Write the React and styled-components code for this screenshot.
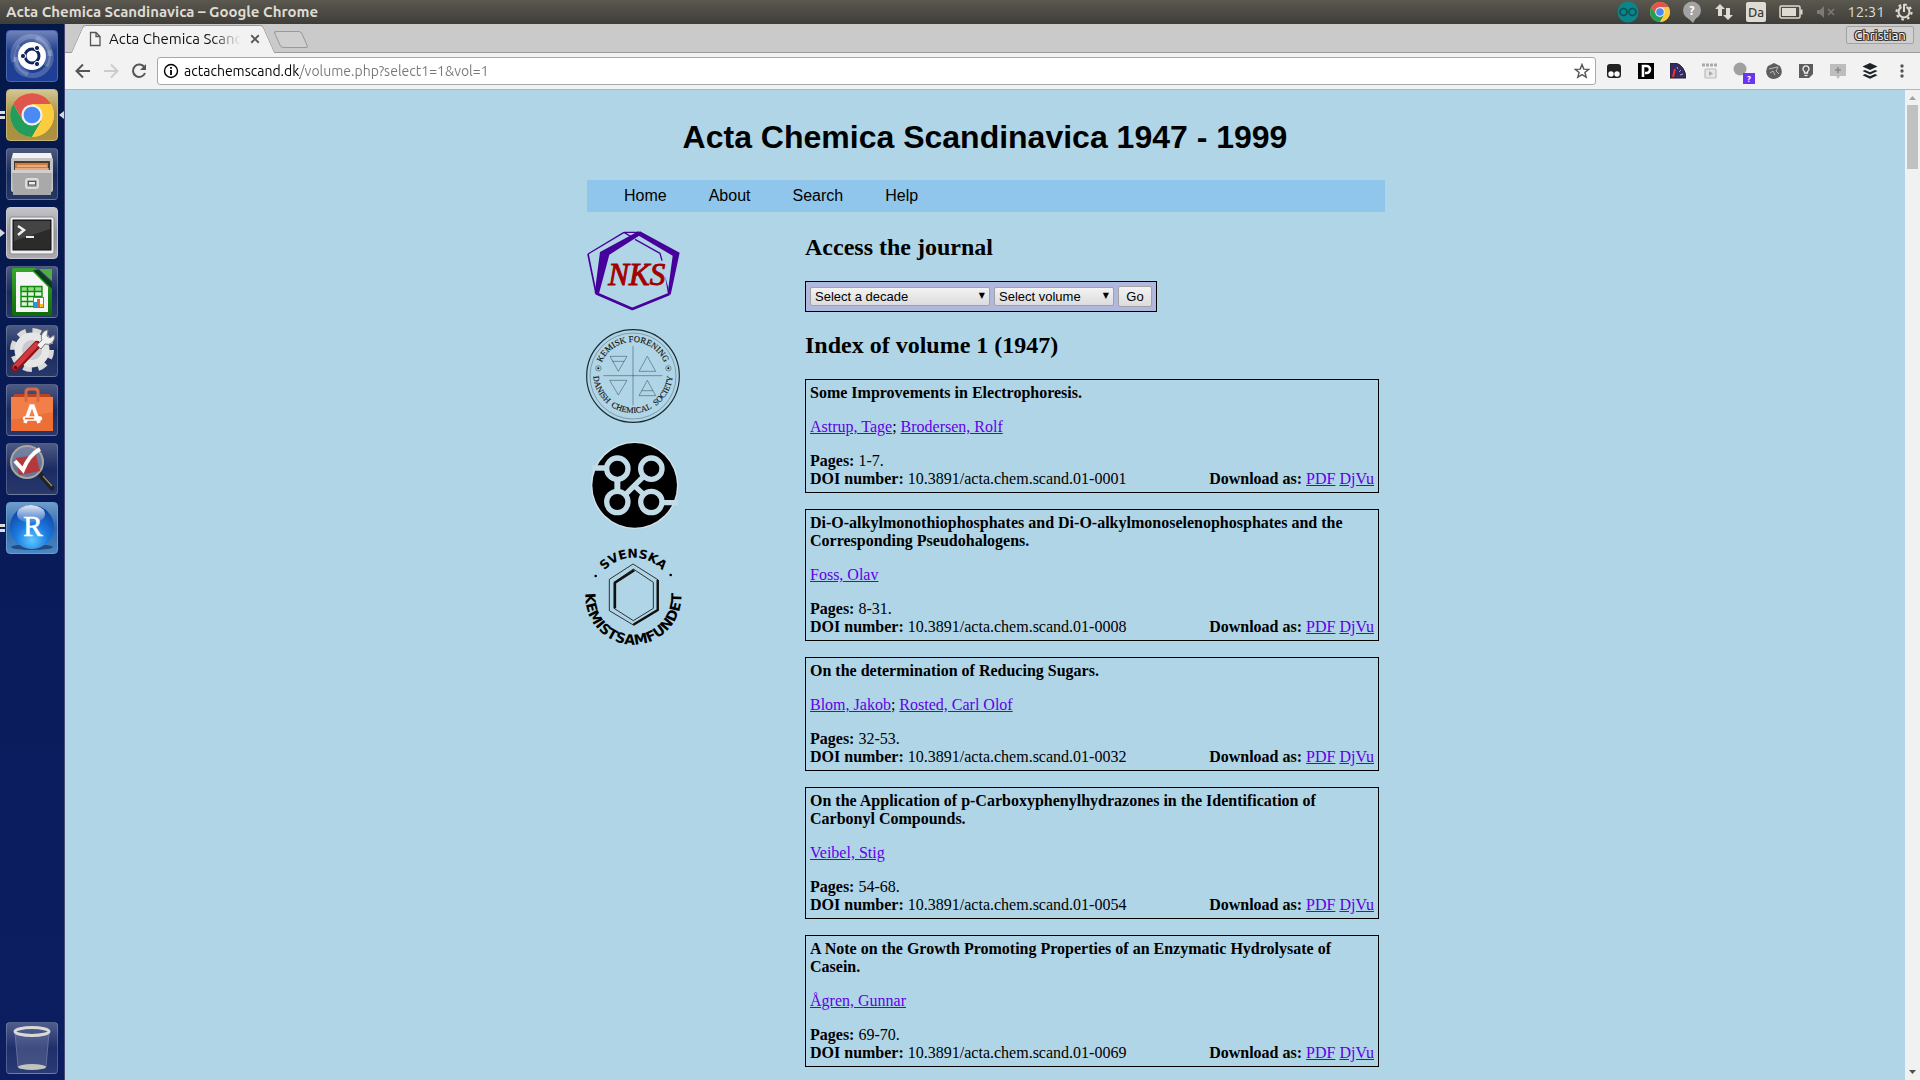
import React from "react";
import styled, { createGlobalStyle } from "styled-components";

const UI = `Ubuntu, "Noto Sans", "Open Sans", sans-serif`;
const SERIF = `"Liberation Serif", "Times New Roman", serif`;
const SANS = `"Liberation Sans", Arial, sans-serif`;
const SKY = "#b0d5e6";
const LINK = "#5f00e6";

const Global = createGlobalStyle`
  *, *::before, *::after { box-sizing: border-box; }
  html, body { margin: 0; padding: 0; overflow: hidden; }
  button, input, select { font: inherit; margin: 0; }
`;

const Desktop = styled.div`
  display: flex;
  flex-direction: column;
  height: 100vh;
  overflow: hidden;
  font-family: ${UI};
`;

/* ---------- system panel ---------- */
const Panel = styled.header`
  flex: none;
  display: flex;
  align-items: center;
  justify-content: space-between;
  height: 24px;
  padding: 0 6px;
  background: linear-gradient(#5a584f, #3e3d38);
  color: #dfdbd2;
`;
const WindowTitle = styled.div`
  font-size: 15px;
  line-height: 20px;
  font-weight: 700;
`;
const Indicators = styled.div`
  display: flex;
  align-items: center;
`;
const Indicator = styled.button`
  display: flex;
  align-items: center;
  justify-content: center;
  width: ${(p) => (p.$wide ? 38 : 32)}px;
  height: 24px;
  padding: 0;
  border: 0;
  background: none;
  color: inherit;
`;
const Clock = styled.button`
  width: 52px;
  padding: 0 4px 0 0;
  border: 0;
  background: none;
  color: inherit;
  font-size: 15px;
  line-height: 20px;
  text-align: center;
`;
const Keyboard = styled.span`
  width: 20px;
  height: 20px;
  border-radius: 2px;
  background: #dfdbd2;
  color: #3c3b37;
  font-size: 13px;
  font-weight: 500;
  line-height: 20px;
`;

/* ---------- launcher ---------- */
const Body = styled.div`
  flex: 1;
  min-height: 0;
  display: flex;
`;
const Launcher = styled.nav`
  flex: none;
  display: flex;
  flex-direction: column;
  gap: 7px;
  width: 65px;
  padding: 6px;
  background: linear-gradient(#041848, #0a1c5c 60%, #0c1e60);
  border-right: 1px solid #4b4673;
`;
const Tile = styled.button`
  position: relative;
  display: block;
  width: 52px;
  height: 52px;
  padding: 0;
  border: 1px solid ${(p) => p.$edge || "rgba(255,255,255,.2)"};
  border-radius: 4px;
  background: ${(p) =>
    p.$bg || "linear-gradient(rgba(255,255,255,.28), rgba(255,255,255,.08) 50%, rgba(255,255,255,.13))"};
  margin-top: ${(p) => (p.$last ? "auto" : 0)};
  & > svg { display: block; margin: -1px; }
`;
const Pip = styled.span`
  position: absolute;
  top: 21px;
  ${(p) => (p.$right ? "right: -7px;" : "left: -7px;")}
  width: 5px;
  height: 8px;
  background: ${(p) => (p.$double ? "linear-gradient(#ddd 3px, transparent 3px 5px, #ddd 5px)" : "#d5d8e0")};
  clip-path: ${(p) =>
    p.$double ? "none" : p.$right ? "polygon(100% 0, 0 50%, 100% 100%)" : "polygon(0 0, 100% 50%, 0 100%)"};
`;

/* ---------- browser chrome ---------- */
const Browser = styled.div`
  flex: 1;
  min-width: 0;
  display: flex;
  flex-direction: column;
`;
const TabStrip = styled.div`
  flex: none;
  display: flex;
  height: 29px;
  padding: 1px 6px 0 12px;
  background: #cacaca;
  border-bottom: 1px solid #999;
`;
const Tab = styled.div`
  position: relative;
  display: flex;
  align-items: center;
  width: 192px;
  height: 28px;
  padding: 0 8px 0 12px;
  z-index: 0;
  font-size: 15px;
  line-height: 20px;
  color: #111;
  &::before, &::after {
    content: "";
    position: absolute;
    z-index: -1;
    top: 0;
    bottom: 0;
    width: 60%;
    background: #f2f2f2;
    border-top: 1px solid #999;
  }
  &::before { left: 0; border-left: 1px solid #999; transform: skewX(-24deg); border-top-left-radius: 3px; }
  &::after { right: 0; border-right: 1px solid #999; transform: skewX(24deg); border-top-right-radius: 3px; }
`;
const TabTitle = styled.span`
  flex: 1;
  margin: 0 8px;
  overflow: hidden;
  white-space: nowrap;
  mask-image: linear-gradient(90deg, #000 78%, transparent);
`;
const PlainButton = styled.button`
  display: flex;
  padding: 0;
  border: 0;
  background: none;
  color: #555;
`;
const NewTab = styled.button`
  width: 28px;
  height: 17px;
  margin: 6px 0 0 8px;
  padding: 0;
  border: 1px solid #999;
  border-radius: 3px;
  background: #cfcfcf;
  transform: skewX(24deg);
`;
const Profile = styled.button`
  width: 68px;
  height: 18px;
  margin: 1px 0 0 auto;
  padding: 0;
  border: 1px solid #a2a2a2;
  border-radius: 2px;
  background: #d0d0d0;
  color: #fff;
  font-size: 13px;
  line-height: 16px;
  text-shadow: 1px 0 #333, -1px 0 #333, 0 1px #333, 0 -1px #333, 1px 1px #444, -1px -1px #444, 1px -1px #444, -1px 1px #444;
`;
const Toolbar = styled.div`
  flex: none;
  display: flex;
  align-items: center;
  height: 37px;
  padding: 0 2px 0 4px;
  background: #f2f2f2;
  border-bottom: 1px solid #b5b5b5;
`;
const ToolButton = styled.button`
  display: flex;
  align-items: center;
  justify-content: center;
  width: ${(p) => (p.$nav ? 28 : 32)}px;
  height: 28px;
  padding: 0;
  border: 0;
  background: none;
  color: #555;
`;
const Omnibox = styled.div`
  flex: 1;
  display: flex;
  align-items: center;
  height: 28px;
  margin: 0 2px 0 4px;
  padding: 0 5px;
  background: #fff;
  border: 1px solid #a9a9a9;
  border-radius: 3px;
`;
const Address = styled.input`
  flex: 1;
  min-width: 0;
  margin: 0 5px;
  padding: 0;
  border: 0;
  outline: 0;
  font-size: 14px;
  line-height: 20px;
  color: transparent;
  background: linear-gradient(90deg, #000 116px, #777 116px);
  background-clip: text;
`;

/* ---------- page ---------- */
const View = styled.div`
  flex: 1;
  min-height: 0;
  display: flex;
`;
const Page = styled.main`
  flex: 1;
  overflow: hidden;
  background: ${SKY};
  color: #000;
  font-family: ${SERIF};
  font-size: 16px;
  line-height: 18px;
`;
const Sheet = styled.div`
  max-width: 800px;
  margin: 0 auto;
  padding-top: 29px;
`;
const Title = styled.h1`
  margin: 0 0 24px;
  font-family: ${SANS};
  font-size: 32px;
  line-height: 37px;
  text-align: center;
`;
const Menu = styled.nav`
  display: flex;
  gap: 42px;
  margin-left: 2px;
  padding: 7px 37px;
  background: #90c6eb;
  font-family: ${SANS};
  & a { color: #000; text-decoration: none; }
`;
const Columns = styled.div`
  display: grid;
  grid-template-columns: 220px 1fr;
`;
const Logos = styled.aside`
  display: flex;
  flex-direction: column;
  gap: 16px;
  padding-top: 18px;
  & svg { display: block; overflow: visible; }
`;
const Content = styled.section`
  padding: 22px 6px 0 0;
`;
const Heading = styled.h2`
  margin: 0 0 20px;
  font-size: 24px;
  line-height: 27px;
`;
const Picker = styled.form`
  display: flex;
  align-items: center;
  gap: 4px;
  width: fit-content;
  margin-bottom: 20px;
  padding: 4px;
  background: #b0b8de;
  border: 1px solid #000;
  font-family: ${SANS};
  font-size: 13px;
  line-height: 15px;
`;
const SelectBox = styled.label`
  position: relative;
  width: ${(p) => p.$width}px;
  &::after {
    content: "▼";
    position: absolute;
    right: 5px;
    top: 1px;
    font-family: "DejaVu Sans", sans-serif;
    font-size: 8px;
    line-height: 15px;
    pointer-events: none;
  }
`;
const Select = styled.select`
  appearance: none;
  display: block;
  width: 100%;
  height: 19px;
  padding: 0 4px;
  border: 1px solid #a3a3a3;
  border-radius: 2px;
  background: linear-gradient(#f3f3f3, #dcdcdc);
  color: #000;
`;
const Go = styled.button`
  width: 34px;
  height: 21px;
  padding: 0;
  border: 1px solid #a3a3a3;
  border-radius: 2px;
  background: linear-gradient(#f3f3f3, #dcdcdc);
  color: #000;
`;
const Card = styled.article`
  margin-bottom: 16px;
  padding: 4px;
  border: 1px solid #000;
  & a { color: ${LINK}; }
`;
const CardTitle = styled.h3`
  margin: 0;
  font-size: 16px;
  line-height: 18px;
`;
const Authors = styled.p`
  margin: 16px 0;
`;
const Row = styled.div`
  display: flex;
  justify-content: space-between;
`;

const ScrollTrack = styled.div`
  flex: none;
  display: flex;
  flex-direction: column;
  justify-content: space-between;
  width: 15px;
  padding: 15px 2px;
  background: #f1f1f1;
  position: relative;
`;
const Thumb = styled.div`
  height: 64px;
  background: #c1c1c1;
`;
const ScrollArrow = styled.span`
  position: absolute;
  left: 4px;
  ${(p) => (p.$down ? "bottom: 6px;" : "top: 6px;")}
  width: 7px;
  height: 4px;
  background: ${(p) => (p.$down ? "#505050" : "#a3a3a3")};
  clip-path: ${(p) => (p.$down ? "polygon(0 0, 100% 0, 50% 100%)" : "polygon(0 100%, 100% 100%, 50% 0)")};
`;

/* ---------- drawings ---------- */
const ChromeLogo = ({ size }) => (
  <svg width={size} height={size} viewBox="-50 -50 100 100" aria-hidden="true">
    <circle r="50" fill="#fbc93d" />
    <path d="M-43-25A50 50 0 0 1 43-25L0-25L-21 12Z" fill="#e0564c" />
    <path d="M-43-25A50 50 0 0 0 0 50L22 12L0 24L-21 12Z" fill="#239d5c" />
    <path d="M43-25L0-25L22 12L0 50A50 50 0 0 0 43-25Z" fill="#fdcb3e" />
    <circle r="24" fill="#f1f1f1" />
    <circle r="19" fill="#4a8af4" />
  </svg>
);

const Ubuntu = () => (
  <svg width="52" height="52" viewBox="0 0 52 52">
    <g fill="none" stroke="#fff" strokeOpacity=".2" strokeWidth="5">
      <path d="M8 32A19 19 0 0 1 30 7Q44 10 44 26" />
      <path d="M44 20A19 19 0 0 1 22 45Q8 42 10 27" />
      <path d="M30 8Q48 18 40 36M22 44Q4 34 14 16" />
    </g>
    <circle cx="26" cy="26" r="14" fill="#fff" />
    <circle cx="26" cy="26" r="7" fill="none" stroke="#10265e" strokeWidth="3" />
    <g fill="#10265e" stroke="#fff" strokeWidth="1">
      <circle cx="17" cy="26" r="2.6" />
      <circle cx="31" cy="18" r="2.6" />
      <circle cx="31" cy="34" r="2.6" />
    </g>
  </svg>
);
const Files = () => (
  <svg width="52" height="52" viewBox="0 0 52 52">
    <path d="M7 5H45L47 13H5Z" fill="#f2f2f2" />
    <rect x="5" y="10" width="42" height="34" rx="2" fill="#c4c4c4" />
    <rect x="8" y="13" width="36" height="10" fill="#4b3a30" />
    <path d="M9 15H42V23H9Z" fill="#d5793f" />
    <path d="M11 18H41M9 21H43" stroke="#f6e0c0" strokeWidth="1" />
    <path d="M6 22H46L45 47H7Z" fill="#a9a9a9" />
    <path d="M6 22H46V25H6Z" fill="#cfcfcf" />
    <rect x="20" y="31" width="12" height="9" rx="2" fill="none" stroke="#ddd" strokeWidth="2" />
    <rect x="22.500" y="33.500" width="7" height="3.500" fill="#eee" stroke="#555" />
  </svg>
);
const Terminal = () => (
  <svg width="52" height="52" viewBox="0 0 52 52">
    <rect x="4" y="10" width="44" height="37" rx="2" fill="#efefef" stroke="#8a8a90" />
    <rect x="7" y="13" width="38" height="30" fill="#2b2b2b" stroke="#111" />
    <path d="M8 14H44V22L8 34Z" fill="#555" opacity=".6" />
    <path d="M12 19L18 23L12 28" fill="none" stroke="#eee" strokeWidth="2.500" />
    <path d="M20 30H28" stroke="#eee" strokeWidth="2" />
  </svg>
);
const Calc = () => (
  <svg width="52" height="52" viewBox="0 0 52 52">
    <defs>
      <linearGradient id="leaf" x1="0" x2="0" y1="0" y2="1">
        <stop offset="0" stopColor="#36a62a" /><stop offset="1" stopColor="#0e6d0b" />
      </linearGradient>
    </defs>
    <path d="M8 4H28L44 20V48H8Z" fill="#f6f6f6" stroke="url(#leaf)" strokeWidth="4" strokeLinejoin="round" />
    <path d="M33 3H46V15Z" fill="#4fb03f" />
    <path d="M27 4L33 4L46 17V23Z" fill="#0b3f1c" />
    <rect x="14" y="20" width="22" height="21" fill="#e3f7de" />
    <rect x="14" y="20" width="22" height="5" fill="#8fdc86" />
    <path d="M15 20.500H36V40.500H15ZM15 25.500H36M15 30.500H36M15 35.500H36M21.500 20V40M28.500 20V40" fill="none" stroke="#128a10" strokeWidth="1.400" />
    <rect x="27.500" y="31.500" width="10" height="10" fill="#fff" stroke="#777" />
    <path d="M28 41V36H31V41Z" fill="#2396e8" /><path d="M31 41V33H34V41Z" fill="#e0622b" /><path d="M34 41V38H37V41Z" fill="#f0c025" />
  </svg>
);
const Settings = () => (
  <svg width="52" height="52" viewBox="0 0 52 52">
    <circle cx="26" cy="25" r="19" fill="none" stroke="#d9d9d9" strokeWidth="6" strokeDasharray="8.500 6.400" />
    <circle cx="26" cy="25" r="13.500" fill="#bfbfbf" stroke="#e6e6e6" strokeWidth="8" />
    <circle cx="26" cy="25" r="10" fill="#c9c9cf" />
    <path d="M9 43L31 20" stroke="#8f1218" strokeWidth="8" strokeLinecap="round" />
    <path d="M9 42L30 20" stroke="#d13a3c" strokeWidth="5" strokeLinecap="round" />
    <circle cx="9.500" cy="42.500" r="1.800" fill="#5d0c10" />
    <path d="M31 20L36 15A7 7 0 0 1 42 5L41 11L44 13L48 10A7 7 0 0 1 39 19L35 24Z" fill="#f0f0f0" stroke="#777" />
  </svg>
);
const Software = () => (
  <svg width="52" height="52" viewBox="0 0 52 52">
    <path d="M5 14L9 10H43L47 14Z" fill="#b9441d" />
    <rect x="5" y="13" width="42" height="34" fill="#ee6f36" />
    <path d="M5 13H47V28L5 36Z" fill="#f58a55" opacity=".6" />
    <path d="M20 18V8Q20 5 23 5H29Q32 5 32 8V18" fill="none" stroke="#d96a45" strokeWidth="3" />
    <path d="M19 39L25 22H27L33 39" fill="none" stroke="#fff" strokeWidth="3.600" />
    <path d="M19 34.500H34" stroke="#fff" strokeWidth="4.500" strokeLinecap="round" />
    <path d="M19 34.500H28" stroke="#e86527" strokeWidth="1.500" />
  </svg>
);
const Magnifier = () => (
  <svg width="52" height="52" viewBox="0 0 52 52">
    <path d="M34 31L46 45" stroke="#222" strokeWidth="5" strokeLinecap="round" />
    <path d="M37 33L46 43" stroke="#888" strokeWidth="1.400" />
    <circle cx="21" cy="19" r="16" fill="#9aa3bb" fillOpacity=".6" stroke="#aaa69c" strokeWidth="2" />
    <path d="M10 15L30 12L34 28L13 32Z" fill="#b5383d" />
    <path d="M9 18L17 27Q23 12 34 6" fill="none" stroke="#fff" strokeWidth="4" />
  </svg>
);
const RStudio = () => (
  <svg width="52" height="52" viewBox="0 0 52 52">
    <defs>
      <radialGradient id="ball" cx=".5" cy=".8" r=".8">
        <stop offset="0" stopColor="#5cc8ff" /><stop offset=".45" stopColor="#1c7be0" /><stop offset="1" stopColor="#0d3f9e" />
      </radialGradient>
      <linearGradient id="shine" x1="0" x2="0" y1="0" y2="1">
        <stop offset="0" stopColor="#fff" stopOpacity=".9" /><stop offset="1" stopColor="#fff" stopOpacity=".1" />
      </linearGradient>
    </defs>
    <ellipse cx="26" cy="45" rx="21" ry="3" fill="#1b3f72" opacity=".8" />
    <circle cx="26" cy="25" r="22" fill="url(#ball)" />
    <ellipse cx="25" cy="12" rx="14" ry="9" fill="url(#shine)" />
    <text x="27" y="34" textAnchor="middle" fontFamily={SERIF} fontSize="29" fill="#fff" stroke="#fff" strokeWidth=".6">R</text>
  </svg>
);
const Trash = () => (
  <svg width="52" height="52" viewBox="0 0 52 52">
    <path d="M9 11L12 45H40L43 11Z" fill="#fff" fillOpacity=".14" stroke="#7f8bb4" strokeOpacity=".6" />
    <ellipse cx="26" cy="45" rx="14" ry="3" fill="#bfc4bd" />
    <ellipse cx="26" cy="9.500" rx="17" ry="4" fill="#4a5888" stroke="#d9d9d6" strokeWidth="3" />
  </svg>
);

const NksLogo = () => (
  <svg width="96" height="82" viewBox="45 180 288 246" role="img" aria-label="Norsk Kjemisk Selskap">
    <g fill="none" stroke="#46009b" strokeLinejoin="round">
      <path d="M162 187H210M162 187L54 252" strokeWidth="4" />
      <path d="M54 252L78 370" strokeWidth="5" />
      <path d="M162 187L185 201M195 208L270 250L276 272" strokeWidth="4" />
      <path d="M78 370L187 417L298 372" strokeWidth="8" />
    </g>
    <path d="M90 246L205 184L212 194L118 254L86 374L74 370Z" fill="#46009b" />
    <path d="M210 184L329 248L302 374L293 370L308 257L204 196Z" fill="#46009b" />
    <path d="M285 318L300 372L293 366Z" fill="#46009b" />
    <text x="115" y="344" fontFamily={SERIF} fontStyle="italic" fontSize="93" fill="#a30000" stroke="#a30000" strokeWidth="3">NKS</text>
  </svg>
);
const DanishLogo = () => (
  <svg width="96" height="96" viewBox="45 474 288 288" role="img" aria-label="Kemisk Forening">
    <defs>
      <path id="dkTop" d="M87 618A102 102 0 0 1 291 618" />
      <path id="dkBottom" d="M70 610A119 119 0 1 0 308 610" />
    </defs>
    <g fill="none" stroke="#1c2a31">
      <circle cx="189" cy="618" r="139" strokeWidth="3.500" />
      <circle cx="189" cy="618" r="129" strokeWidth="1" />
      <g strokeWidth="1.300">
        <path d="M189 528V706M100 617H277" />
        <path d="M120 559H171L145 604ZM127 574H163M207 604H257L232 559ZM119 631H171L145 675ZM207 677H257L232 631ZM215 662H249" />
        <circle cx="85" cy="595" r="8" /><circle cx="295" cy="595" r="8" />
      </g>
    </g>
    <circle cx="85" cy="595" r="3" /><circle cx="295" cy="595" r="3" />
    <g fontFamily={SERIF} textAnchor="middle" fill="#111" stroke="#111" strokeWidth=".4">
      <text fontSize="26"><textPath href="#dkTop" startOffset="50%">KEMISK FORENING</textPath></text>
      <text fontSize="25"><textPath href="#dkBottom" startOffset="50%">DANISH&#160; CHEMICAL&#160; SOCIETY</textPath></text>
    </g>
  </svg>
);
const MoleculeLogo = () => (
  <svg width="96" height="90" viewBox="45 60 288 270" role="img" aria-label="Chemical society emblem">
    <circle cx="194" cy="196" r="131" fill="#d3e4ea" />
    <circle cx="194" cy="196" r="127" fill="#000" />
    <g fill="none" stroke="#c2dce7" strokeWidth="16">
      <circle cx="142" cy="146" r="32" /><circle cx="244" cy="146" r="32" />
      <circle cx="142" cy="246" r="32" /><circle cx="244" cy="246" r="32" />
      <path d="M66 144H108M278 248H324" />
      <path d="M142 178V214" strokeWidth="18" />
      <path d="M221 169L166 224" />
      <path d="M192 196L221 223" />
    </g>
  </svg>
);
const SwedishLogo = () => (
  <svg width="96" height="100" viewBox="45 378 288 300" role="img" aria-label="Svenska Kemistsamfundet">
    <defs>
      <path id="seTop" d="M73 530A117 117 0 0 1 307 530" />
      <path id="seBottom" d="M60 468A144 144 0 1 0 320 468" />
    </defs>
    <g fontFamily="DejaVu Sans, sans-serif" fontWeight="700" textAnchor="middle">
      <text fontSize="37"><textPath href="#seTop" startOffset="50%">SVENSKA</textPath></text>
      <text fontSize="42"><textPath href="#seBottom" startOffset="50%">KEMISTSAMFUNDET</textPath></text>
    </g>
    <circle cx="77" cy="468" r="4" /><circle cx="302" cy="465" r="4" />
    <g fill="none" stroke="#111">
      <path d="M189 432L265 480V570L190 615L118 572V478ZM190 447L250 487V565L190 602L132 565V487Z" strokeWidth="2.500" />
      <path d="M263 480V570L190 614M135 565V488L193 451" strokeWidth="7" />
    </g>
  </svg>
);

const Svg = ({ size = 16, children, ...rest }) => (
  <svg width={size} height={size} viewBox="0 0 16 16" fill="none" stroke="currentColor" strokeWidth="2" {...rest}>{children}</svg>
);

const extensions = [
  ["Tampermonkey", <Svg stroke="none"><rect x="1" y="1" width="14" height="14" rx="3" fill="#222" /><circle cx="5" cy="11" r="2.700" fill="#fff" /><circle cx="11" cy="11" r="2.700" fill="#fff" /></Svg>],
  ["Pushbullet", <Svg><rect width="16" height="16" fill="#000" stroke="none" /><path d="M5 14V3H8.500A3 3 0 0 1 8.500 10H7" stroke="#fff" strokeWidth="2.600" /></Svg>],
  ["Speed dial", <Svg><path d="M0 0H6Q15 3 16 15H0Z" fill="#352a63" stroke="#222" strokeWidth="1" /><path d="M3 14L5 6" stroke="#f03030" /><path d="M7 4L8 6M11 7L9 9M13 11L10 12" stroke="#a9a0d8" strokeWidth="1" /></Svg>],
  ["Video", <Svg stroke="#bbb" strokeWidth="1.200"><path d="M0 2H15" stroke="#aaa" strokeWidth="3" strokeDasharray="3 1" /><rect x="3" y="6" width="11" height="9" rx="1" fill="#e6e6e6" /><path d="M7 8V13L11 10.500Z" fill="#aaa" stroke="none" /></Svg>],
  ["Question", <svg width="26" height="26" viewBox="0 0 26 26"><circle cx="11" cy="11" r="6.500" fill="#a0a0a0" /><rect x="14" y="15" width="12" height="11" fill="#6a35f0" /><text x="20" y="24" textAnchor="middle" fontSize="9" fontWeight="700" fill="#fff">?</text></svg>],
  ["Cookie", <Svg><path d="M6 1L8 0L10 1L14 3Q17 8 15 12Q12 16 8 16Q3 16 1 12Q-1 7 2 3Z" fill="#5e5e5e" stroke="none" /><path d="M3 6L7 5L12 4L10 8L13 11M4 10L7 8L9 12" stroke="#bbb" strokeWidth="1" /></Svg>],
  ["Bulb", <Svg><path d="M1 1H15V11L11 15H1Z" fill="#5c5c5c" stroke="none" /><path d="M6.500 10V8.500A3 3 0 1 1 9.500 8.500V10Z" stroke="#eee" strokeWidth="1.300" /><path d="M6.500 12.500H9.500" stroke="#eee" strokeWidth="1.300" /></Svg>],
  ["Add note", <Svg><path d="M0 1H16V13H10L8 16L6 13H0Z" fill="#bdbdbd" stroke="none" /><path d="M8 4V10M5 7H11" stroke="#888" strokeWidth="1.500" /></Svg>],
  ["Buffer", <Svg stroke="none" fill="#1c2226"><path d="M8 0L15.500 3.500L8 7L.5 3.500Z" /><path d="M.5 8L3 7L8 9.200L13 7L15.500 8L8 11.500Z" /><path d="M.5 12.200L3 11L8 13.200L13 11L15.500 12.200L8 15.700Z" /></Svg>],
];

const apps = [
  { name: "Search your computer", icon: <Ubuntu />, bg: "linear-gradient(#7084bb, #203f8e 40%, #1e3f98)", edge: "#4c66ae" },
  { name: "Google Chrome", icon: <svg width="52" height="52" viewBox="0 0 52 52"><g transform="translate(4 4)"><ChromeLogo size={44} /></g></svg>, bg: "linear-gradient(#d3c793, #a88f42 50%, #ab9140)", edge: "#c9b674", pips: ["double", "right"] },
  { name: "Files", icon: <Files /> },
  { name: "Terminal", icon: <Terminal />, bg: "linear-gradient(#c4c4ca, #97979f 50%, #a9a9af)", edge: "#c9c9cf", pips: ["left"] },
  { name: "LibreOffice Calc", icon: <Calc /> },
  { name: "System Settings", icon: <Settings /> },
  { name: "Ubuntu Software", icon: <Software /> },
  { name: "Magnifier", icon: <Magnifier /> },
  { name: "RStudio", icon: <RStudio />, bg: "linear-gradient(#6d9ccb, #2d68ac 50%, #4a88c4)", edge: "#6c9ccb", pips: ["double"] },
  { name: "Trash", icon: <Trash />, last: true },
];

const articles = [
  { title: "Some Improvements in Electrophoresis.", authors: ["Astrup, Tage", "Brodersen, Rolf"], pages: "1-7.", doi: "10.3891/acta.chem.scand.01-0001" },
  { title: "Di-O-alkylmonothiophosphates and Di-O-alkylmonoselenophosphates and the Corresponding Pseudohalogens.", authors: ["Foss, Olav"], pages: "8-31.", doi: "10.3891/acta.chem.scand.01-0008" },
  { title: "On the determination of Reducing Sugars.", authors: ["Blom, Jakob", "Rosted, Carl Olof"], pages: "32-53.", doi: "10.3891/acta.chem.scand.01-0032" },
  { title: "On the Application of p-Carboxyphenylhydrazones in the Identification of Carbonyl Compounds.", authors: ["Veibel, Stig"], pages: "54-68.", doi: "10.3891/acta.chem.scand.01-0054" },
  { title: "A Note on the Growth Promoting Properties of an Enzymatic Hydrolysate of Casein.", authors: ["Ågren, Gunnar"], pages: "69-70.", doi: "10.3891/acta.chem.scand.01-0069" },
];

function Article({ title, authors, pages, doi }) {
  return (
    <Card>
      <CardTitle>{title}</CardTitle>
      <Authors>
        {authors.map((a, i) => (
          <React.Fragment key={a}>{i > 0 && "; "}<a href="#author">{a}</a></React.Fragment>
        ))}
      </Authors>
      <div><b>Pages:</b> {pages}</div>
      <Row>
        <span><b>DOI number:</b> {doi}</span>
        <span><b>Download as:</b> <a href="#pdf">PDF</a> <a href="#djvu">DjVu</a></span>
      </Row>
    </Card>
  );
}

export default function App() {
  return (
    <Desktop>
      <Global />
      <Panel>
        <WindowTitle>Acta Chemica Scandinavica – Google Chrome</WindowTitle>
        <Indicators>
          <Indicator aria-label="Arduino">
            <svg width="22" height="22" viewBox="0 0 22 22" fill="none"><circle cx="11" cy="11" r="10.500" fill="#0a8589" /><circle cx="6.500" cy="11" r="3.500" stroke="#0b4f54" strokeWidth="1.600" /><circle cx="15.500" cy="11" r="3.500" stroke="#0b4f54" strokeWidth="1.600" /></svg>
          </Indicator>
          <Indicator aria-label="Chrome"><ChromeLogo size={20} /></Indicator>
          <Indicator aria-label="Help">
            <svg width="20" height="22" viewBox="0 0 20 22"><circle cx="10" cy="9.500" r="9" fill="#a3a3a3" /><path d="M6 17L11 22L14 17Z" fill="#a3a3a3" /><text x="10" y="14" textAnchor="middle" fontSize="12" fontWeight="700" fill="#fff">?</text></svg>
          </Indicator>
          <Indicator aria-label="Network">
            <svg width="18" height="18" viewBox="0 0 18 18" fill="#dfdbd2"><path d="M5 1L10 6H7V13H3V6H0Z" /><path d="M13 17L8 12H11V5H15V12H18Z" /></svg>
          </Indicator>
          <Indicator aria-label="Keyboard layout"><Keyboard>Da</Keyboard></Indicator>
          <Indicator $wide aria-label="Battery">
            <svg width="24" height="14" viewBox="0 0 24 14" fill="none" stroke="#dfdbd2"><rect x="1" y="1" width="20" height="12" rx="1.500" strokeWidth="1.500" /><rect x="3" y="3" width="14" height="8" fill="#dfdbd2" stroke="none" /><path d="M22.500 4.500V9.500" strokeWidth="2" /></svg>
          </Indicator>
          <Indicator aria-label="Sound muted">
            <svg width="18" height="14" viewBox="0 0 18 14" fill="#7b7a73"><path d="M0 5H3L7 1V13L3 9H0Z" /><path d="M11 4L17 10M17 4L11 10" stroke="#7b7a73" strokeWidth="1.600" /></svg>
          </Indicator>
          <Clock>12:31</Clock>
          <svg width="20" height="20" viewBox="-10 -10 20 20" fill="none" stroke="#dfdbd2"><path d="M-2.500-5A5.500 5.500 0 1 0 2.500-5M0-8V0" strokeWidth="2" /><circle r="7.500" strokeWidth="2.200" strokeDasharray="2.600 3.290" /></svg>
        </Indicators>
      </Panel>
      <Body>
        <Launcher aria-label="Launcher">
          {apps.map((a) => (
            <Tile key={a.name} aria-label={a.name} $bg={a.bg} $edge={a.edge} $last={a.last}>
              {a.icon}
              {(a.pips || []).map((p) => <Pip key={p} $double={p === "double"} $right={p === "right"} />)}
            </Tile>
          ))}
        </Launcher>
        <Browser>
          <TabStrip>
            <Tab>
              <svg width="12" height="16" viewBox="0 0 12 16" fill="none" stroke="#555" strokeWidth="1.300"><path d="M1.500 1.500H7L11 5.500V14.500H1.500ZM7 1.500V5.500H11" /></svg>
              <TabTitle>Acta Chemica Scandinavica</TabTitle>
              <PlainButton aria-label="Close tab"><Svg size={12}><path d="M3 3L13 13M13 3L3 13" strokeWidth="2.400" /></Svg></PlainButton>
            </Tab>
            <NewTab aria-label="New tab" />
            <Profile>Christian</Profile>
          </TabStrip>
          <Toolbar>
            <ToolButton $nav aria-label="Back"><Svg><path d="M15 8H2M8 1.500L1.500 8L8 14.500" /></Svg></ToolButton>
            <ToolButton $nav aria-label="Forward"><Svg stroke="#ccc"><path d="M1 8H14M8 1.500L14.500 8L8 14.500" /></Svg></ToolButton>
            <ToolButton $nav aria-label="Reload"><Svg><path d="M13.500 4.500A6.200 6.200 0 1 0 14 10" /><path d="M15 1V7H9Z" fill="currentColor" stroke="none" /></Svg></ToolButton>
            <Omnibox>
              <Svg strokeWidth="1.400"><circle cx="8" cy="8" r="6.500" /><path d="M8 7V12M8 4V5.700" strokeWidth="1.800" /></Svg>
              <Address aria-label="Address" defaultValue="actachemscand.dk/volume.php?select1=1&vol=1" />
              <PlainButton aria-label="Bookmark this page"><Svg strokeWidth="1.400"><path d="M8 1.500L9.800 6.100L14.700 6.400L10.900 9.500L12.200 14.300L8 11.600L3.800 14.300L5.100 9.500L1.300 6.400L6.200 6.100Z" /></Svg></PlainButton>
            </Omnibox>
            {extensions.map(([name, icon]) => <ToolButton key={name} aria-label={name}>{icon}</ToolButton>)}
            <ToolButton aria-label="Menu"><Svg stroke="none" fill="currentColor"><circle cx="8" cy="3" r="1.700" /><circle cx="8" cy="8" r="1.700" /><circle cx="8" cy="13" r="1.700" /></Svg></ToolButton>
          </Toolbar>
          <View>
            <Page>
              <Sheet>
                <Title>Acta Chemica Scandinavica 1947 - 1999</Title>
                <Menu>
                  <a href="#home">Home</a>
                  <a href="#about">About</a>
                  <a href="#search">Search</a>
                  <a href="#help">Help</a>
                </Menu>
                <Columns>
                  <Logos>
                    <NksLogo />
                    <DanishLogo />
                    <MoleculeLogo />
                    <SwedishLogo />
                  </Logos>
                  <Content>
                    <Heading>Access the journal</Heading>
                    <Picker onSubmit={(e) => e.preventDefault()}>
                      <SelectBox $width={180}><Select aria-label="Decade"><option>Select a decade</option></Select></SelectBox>
                      <SelectBox $width={120}><Select aria-label="Volume"><option>Select volume</option></Select></SelectBox>
                      <Go>Go</Go>
                    </Picker>
                    <Heading>Index of volume 1 (1947)</Heading>
                    {articles.map((a) => <Article key={a.doi} {...a} />)}
                  </Content>
                </Columns>
              </Sheet>
            </Page>
            <ScrollTrack>
              <Thumb />
              <ScrollArrow />
              <ScrollArrow $down />
            </ScrollTrack>
          </View>
        </Browser>
      </Body>
    </Desktop>
  );
}
